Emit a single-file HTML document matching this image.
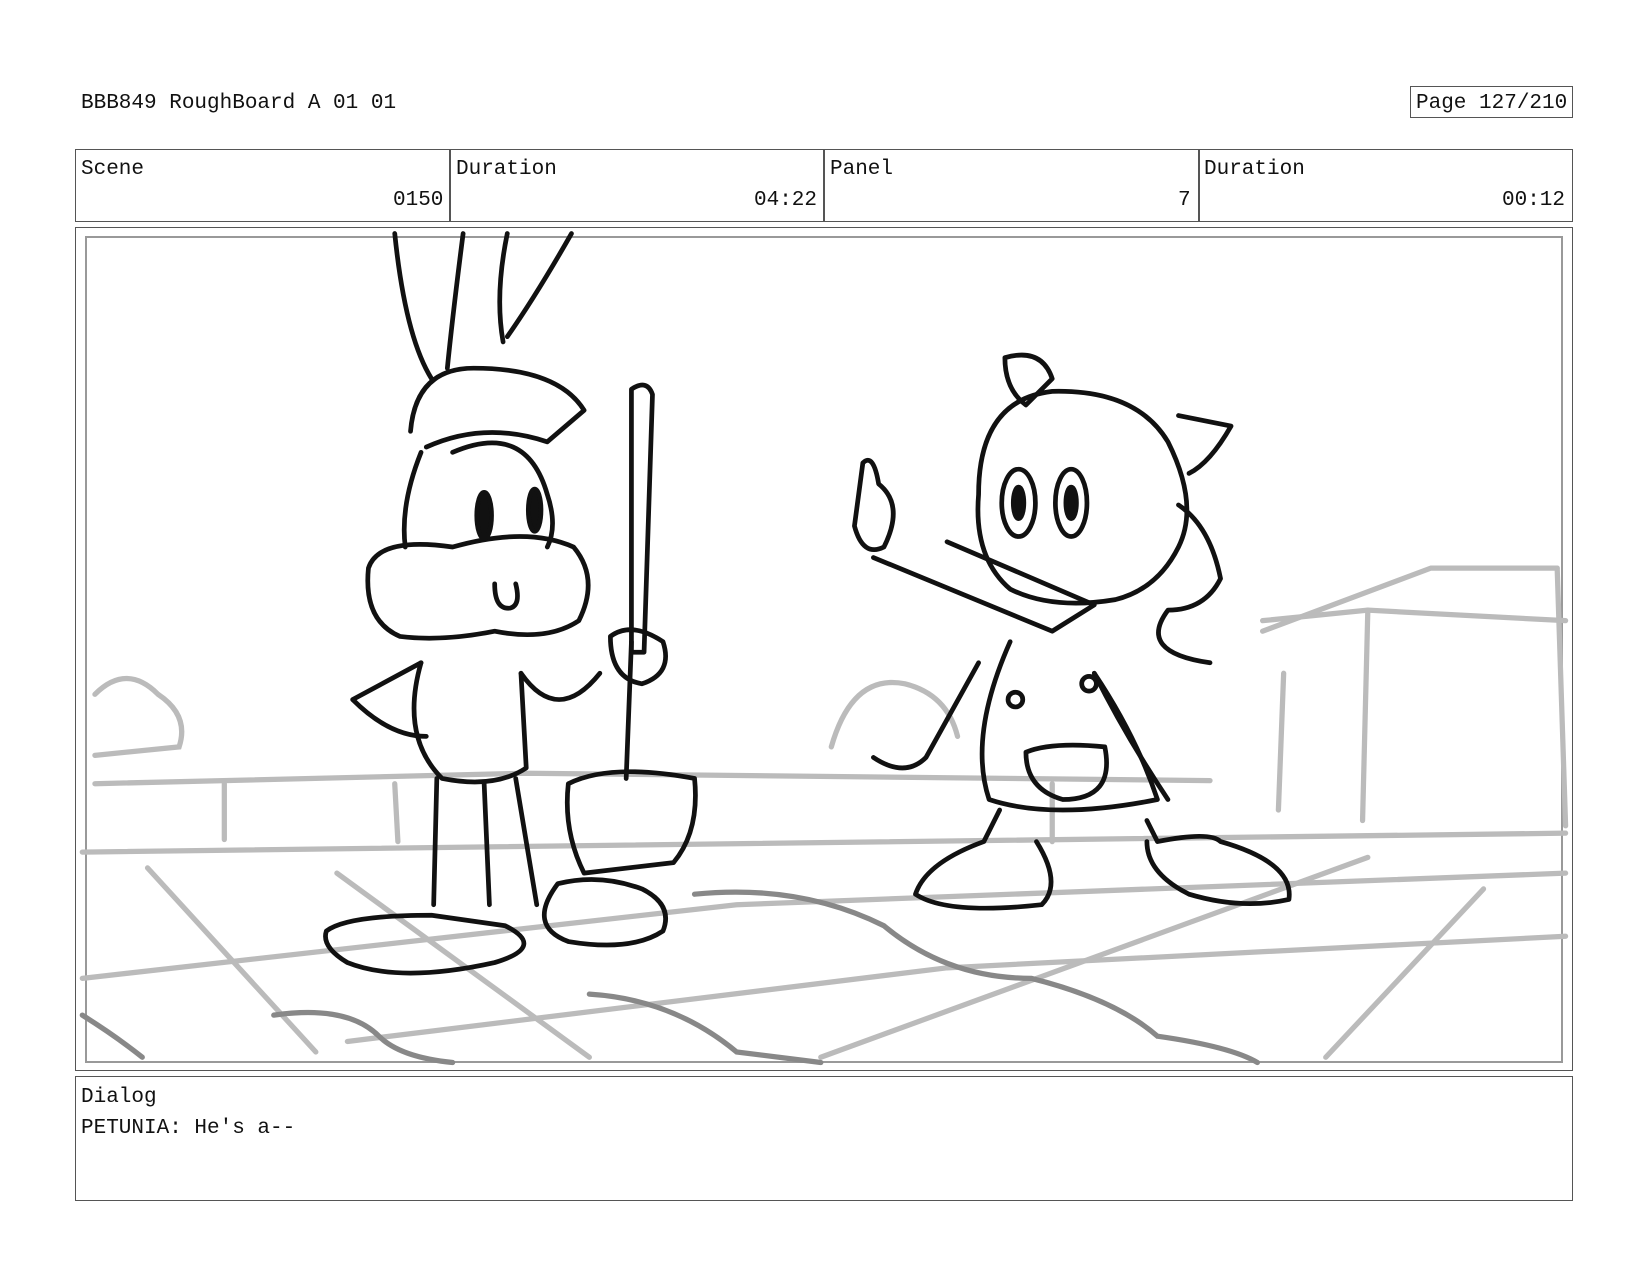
<!DOCTYPE html>
<html><head><meta charset="utf-8"><style>
html,body{margin:0;padding:0;background:#fff;}
body{width:1650px;height:1275px;position:relative;overflow:hidden;font-family:"Liberation Mono",monospace;color:#111;}
.t{position:absolute;font-size:21px;white-space:pre;line-height:1;}
.box{position:absolute;border:1px solid #555;box-sizing:border-box;}
svg{position:absolute;left:0;top:0;}
</style></head><body>
<div class="t" style="left:81px;top:93px">BBB849 RoughBoard A 01 01</div>
<div class="box" style="left:1410px;top:86px;width:163px;height:32px"></div>
<div class="t" style="left:1416px;top:93px">Page 127/210</div>

<div class="box" style="left:75px;top:149px;width:1498px;height:73px"></div>
<div class="box" style="left:449px;top:149px;width:1px;height:73px"></div>
<div class="box" style="left:823px;top:149px;width:1px;height:73px"></div>
<div class="box" style="left:1198px;top:149px;width:1px;height:73px"></div>
<div class="t" style="left:81px;top:159px">Scene</div>
<div class="t" style="left:393px;top:190px">0150</div>
<div class="t" style="left:456px;top:159px">Duration</div>
<div class="t" style="left:754px;top:190px">04:22</div>
<div class="t" style="left:830px;top:159px">Panel</div>
<div class="t" style="left:1178px;top:190px">7</div>
<div class="t" style="left:1204px;top:159px">Duration</div>
<div class="t" style="left:1502px;top:190px">00:12</div>

<div class="box" style="left:75px;top:227px;width:1498px;height:844px"></div>
<div class="box" style="left:85px;top:236px;width:1478px;height:827px;border-color:#999;border-width:2px"></div>

<div class="box" style="left:75px;top:1076px;width:1498px;height:125px"></div>
<div class="t" style="left:81px;top:1087px">Dialog</div>
<div class="t" style="left:81px;top:1118px">PETUNIA: He's a--</div>

<svg width="1650" height="1275" viewBox="0 0 1568 1212">
<g fill="none" stroke="#bbb" stroke-width="5" stroke-linecap="round">
<path d="M78 810 L1488 792"/>
<path d="M78 930 L700 860 L1488 830"/>
<path d="M330 990 L900 920 L1488 890"/>
<path d="M140 825 L300 1000"/>
<path d="M320 830 L560 1005"/>
<path d="M780 1005 L1300 815"/>
<path d="M1260 1005 L1410 845"/>
<path d="M90 745 L500 735 L1150 742"/>
<path d="M90 660 Q120 630 150 660 Q180 680 170 710 L90 718"/>
<path d="M790 710 Q810 640 860 650 Q900 660 910 700"/>
<path d="M1200 600 L1360 540 L1480 540"/>
<path d="M1200 590 L1300 580 L1488 590"/>
<path d="M1300 580 L1295 780"/>
<path d="M1220 640 L1215 770"/>
<path d="M1480 540 L1488 785"/>
<path d="M213 745 L213 798 M375 745 L378 800 M1000 745 L1000 800"/>
</g>
<g fill="none" stroke="#888" stroke-width="5" stroke-linecap="round">
<path d="M260 965 Q330 955 360 985 Q380 1005 430 1010"/>
<path d="M660 850 Q760 840 840 880 Q900 930 980 930 Q1060 950 1100 985 Q1170 995 1195 1010"/>
<path d="M78 965 Q110 985 135 1005"/>
<path d="M560 945 Q640 950 700 1000 Q740 1005 780 1010"/>
</g>
<g fill="none" stroke="#111" stroke-width="4.5" stroke-linecap="round" stroke-linejoin="round">
<path d="M375 222 Q385 320 410 360"/>
<path d="M440 222 Q430 300 425 350"/>
<path d="M482 222 Q470 280 478 325"/>
<path d="M543 222 Q510 280 482 320"/>
<path d="M390 410 Q395 350 450 350 Q530 350 555 390 L520 420 Q460 400 405 425"/>
<path d="M400 430 Q380 480 385 520"/>
<path d="M430 430 Q500 400 520 470 Q530 500 520 520"/>
<path d="M350 540 Q360 510 430 520 Q500 500 545 520 Q570 550 550 590 Q520 610 470 600 Q420 610 380 605 Q345 590 350 540Z"/>
<ellipse cx="460" cy="490" rx="7" ry="22" fill="#111"/>
<ellipse cx="508" cy="485" rx="6" ry="20" fill="#111"/>
<path d="M470 555 Q470 580 485 578 Q495 575 490 555"/>
<path d="M400 630 Q380 700 420 740 Q470 750 500 730 L495 640"/>
<path d="M335 665 L400 630 M335 665 Q370 700 405 700"/>
<path d="M495 640 Q530 690 570 640"/>
<path d="M415 740 L412 860 M460 745 L465 860 M490 740 L510 860"/>
<path d="M310 885 Q330 870 410 870 L480 880 Q520 900 470 915 Q380 935 330 915 Q305 900 310 885Z"/>
<path d="M530 840 Q570 830 610 845 Q640 860 630 885 Q600 905 540 895 Q500 880 530 840Z"/>
<path d="M600 370 Q615 360 620 375 L612 620 L600 620Z"/>
<path d="M600 610 L595 740"/>
<path d="M540 745 Q580 725 660 740 Q665 790 640 820 L555 830 Q535 790 540 745Z"/>
<path d="M580 605 Q600 590 630 610 Q640 640 610 650 Q580 645 580 605Z"/>
<path d="M955 340 Q990 330 1000 360 L975 385 Q955 370 955 340Z"/>
<path d="M1120 395 L1170 405 Q1150 440 1130 450"/>
<path d="M930 470 Q930 380 1000 372 Q1080 370 1110 420 Q1140 480 1120 520 Q1100 560 1060 570 Q1000 580 960 560 Q925 530 930 470Z"/>
<ellipse cx="968" cy="478" rx="16" ry="32"/>
<ellipse cx="1018" cy="478" rx="15" ry="32"/>
<ellipse cx="968" cy="478" rx="5" ry="15" fill="#111"/>
<ellipse cx="1018" cy="478" rx="5" ry="15" fill="#111"/>
<path d="M1120 480 Q1150 500 1160 550 Q1145 580 1110 580 Q1080 620 1150 630"/>
<path d="M820 440 Q830 430 835 460 Q860 480 840 520 Q820 530 812 500 Z"/>
<path d="M830 530 L1000 600 L1040 575 L900 515"/>
<path d="M960 610 Q920 700 940 760 Q1000 780 1100 760 Q1080 700 1040 640"/>
<path d="M930 630 L880 720 Q860 740 830 720"/>
<path d="M1040 640 Q1070 700 1110 760"/>
<path d="M975 715 Q1000 705 1050 710 Q1060 760 1010 760 Q975 750 975 715Z"/>
<path d="M950 770 L935 800 Q880 820 870 850 Q900 870 990 860 Q1010 840 985 800"/>
<path d="M1090 780 L1100 800 Q1150 790 1160 800 Q1230 820 1225 855 Q1180 865 1130 850 Q1090 830 1090 800"/>
<circle cx="965" cy="665" r="7"/>
<circle cx="1035" cy="650" r="7"/>
</g>
</svg>
</body></html>
